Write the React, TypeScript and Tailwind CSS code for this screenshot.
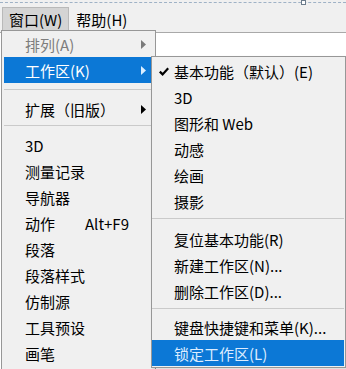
import React from "react";

const font = { fontFamily: '"Noto Sans CJK SC", "Noto Sans", sans-serif' };

function Arrow({ tone }: { tone: "dark" | "light" | "gray" }) {
  const fill = tone === "dark" ? "#000000" : tone === "light" ? "#dbeeff" : "#7a7a7a";
  return (
    <svg width="5" height="9" viewBox="0 0 5 9" className="ml-auto">
      <path d="M0 0 L5 4.5 L0 9 Z" fill={fill} />
    </svg>
  );
}

function Check() {
  return (
    <svg width="10" height="9" viewBox="0 0 10 9">
      <path d="M0.8 4.6 L3.6 7.4 L9.2 1.2" stroke="#000" strokeWidth="2.2" fill="none" />
    </svg>
  );
}

function Sep({ h, line }: { h: string; line: string }) {
  return (
    <div className={`${h} relative`}>
      <div className={`absolute left-0 right-0 ${line} border-t border-[#cacaca]`} />
    </div>
  );
}

export default function App() {
  return (
    <div className="relative w-[346px] h-[369px] overflow-hidden bg-white text-[15px] text-black flex flex-col" style={font}>
      {/* menu bar */}
      <div className="h-[33px] bg-[#f0f0f0] border-b border-[#a9a9a9] relative">
        <div className="absolute left-0 right-0 top-[2px] border-t border-dashed border-[#9fb2c6]" />
        <div className="absolute left-[301px] top-0 w-[5px] h-[5px] border border-[#6b7b8b] bg-white" />
        <div className="flex items-center pt-[7px] pl-[2px] gap-[7px]">
          <div className="h-[24px] px-[6px] flex items-center bg-[#d4d4d4] border border-[#b9b9b9] leading-none">
            窗口(W)
          </div>
          <div className="h-[24px] flex items-center leading-none">帮助(H)</div>
        </div>
      </div>
      <div className="flex-1 bg-white" />

      {/* main dropdown */}
      <div className="absolute left-[1px] top-[30px] w-[155px] h-[345px] bg-[#f0f0f0] border border-[#979797] p-[2px] pt-0 leading-none">
        <div className="h-[26px] flex items-center pl-[21px] pr-[7px] text-[#7d7d7d]">
          排列(A)
          <Arrow tone="gray" />
        </div>
        <div className="h-[26px] flex items-center pl-[21px] pr-[7px] bg-[#0c78d6] text-white">
          工作区(K)
          <Arrow tone="light" />
        </div>
        <Sep h="h-[13px]" line="top-[6px]" />
        <div className="h-[26px] flex items-center pl-[21px] pr-[7px]">
          扩展（旧版）
          <Arrow tone="dark" />
        </div>
        <Sep h="h-[10px]" line="top-[3px]" />
        {["3D", "测量记录", "导航器"].map((t) => (
          <div key={t} className="h-[26px] flex items-center pl-[21px]">
            {t}
          </div>
        ))}
        <div className="h-[26px] flex items-center pl-[21px]">
          <span className="w-[60px]">动作</span>
          <span>Alt+F9</span>
        </div>
        {["段落", "段落样式", "仿制源", "工具预设", "画笔"].map((t) => (
          <div key={t} className="h-[26px] flex items-center pl-[21px]">
            {t}
          </div>
        ))}
      </div>

      {/* workspace submenu */}
      <div className="absolute left-[151px] top-[56px] w-[195px] h-[312px] bg-[#f0f0f0] border border-[#979797] py-[1px] pr-[1px] leading-none shadow-[2px_2px_3px_rgba(0,0,0,0.15)]">
        <div className="h-[26px] flex items-center">
          <span className="w-[22px] flex justify-center pl-[1px]">
            <Check />
          </span>
          基本功能（默认）(E)
        </div>
        {["3D", "图形和 Web", "动感", "绘画", "摄影"].map((t) => (
          <div key={t} className="h-[26px] flex items-center pl-[22px]">
            {t}
          </div>
        ))}
        <Sep h="h-[12px]" line="top-[4px]" />
        {["复位基本功能(R)", "新建工作区(N)...", "删除工作区(D)..."].map((t) => (
          <div key={t} className="h-[26px] flex items-center pl-[22px]">
            {t}
          </div>
        ))}
        <Sep h="h-[10px]" line="top-[4px]" />
        <div className="h-[26px] flex items-center pl-[22px]">键盘快捷键和菜单(K)...</div>
        <div className="h-[26px] flex items-center pl-[22px] bg-[#0c78d6] text-[#dcecff]">锁定工作区(L)</div>
      </div>
    </div>
  );
}
